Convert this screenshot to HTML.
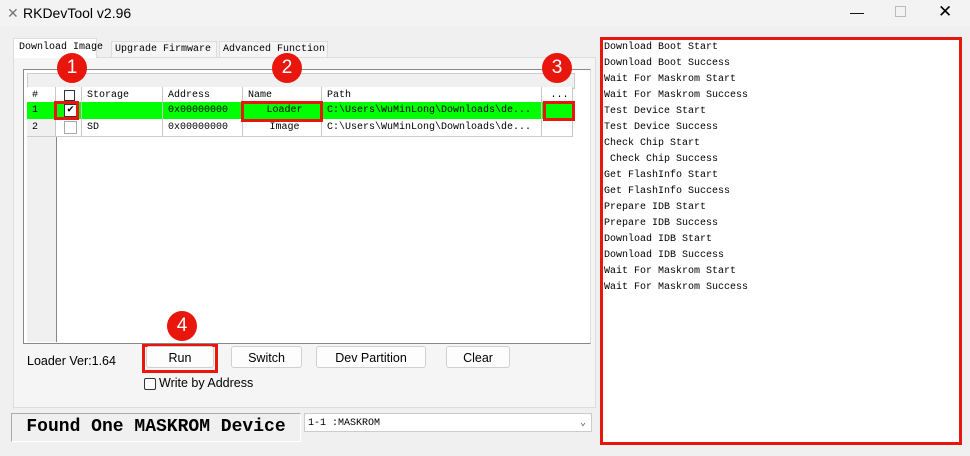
<!DOCTYPE html><html><head><style>
body{margin:0;width:970px;height:456px;background:#f0f0f0;font-family:"Liberation Sans",sans-serif;position:relative;overflow:hidden}
.a{position:absolute}
.mono{font-family:"Liberation Mono",monospace;font-size:10px}
.btn{position:absolute;top:346px;height:22px;background:#fdfdfd;border:1px solid #d0d0d0;border-radius:3px;font-size:12.5px;text-align:center;line-height:22px;box-sizing:border-box}
.c{position:absolute;width:30px;height:30px;border-radius:50%;background:#e8160c;color:#fff;font-size:19px;text-align:center;line-height:30px}
.row{position:absolute;left:27px;width:546px;height:17px;line-height:17px}
.cell{position:absolute;top:0;height:17px;border-right:1px solid #c8c8c8;box-sizing:border-box;padding-left:5px;white-space:nowrap;overflow:hidden}
.log div{height:16px;line-height:16px}
.tab{position:absolute;top:41px;height:16px;line-height:16px;border:1px solid #ddd;border-bottom:none;background:#f5f5f5;padding-left:3px;box-sizing:border-box;white-space:nowrap}
</style></head><body>
<div class="a" style="left:0;top:0;width:970px;height:27px;background:#f3f3f3"></div>
<div class="a" style="left:7px;top:5px;font-size:14px;color:#777">✕</div>
<div class="a" style="left:23px;top:5px;font-size:14px">RKDevTool v2.96</div>
<div class="a" style="left:850px;top:4px;font-size:14px">—</div>
<div class="a" style="left:895px;top:6px;width:9px;height:9px;border:1px solid #bbb"></div>
<div class="a" style="left:938px;top:2px;font-size:17px">✕</div>
<!-- tabs -->
<div class="a" style="left:13px;top:57px;width:581px;height:349px;background:#f5f5f5;border:1px solid #ddd"></div>
<div class="tab mono" style="left:13px;top:38px;width:84px;height:20px;line-height:18px;background:#fff;padding-left:5px">Download Image</div>
<div class="tab mono" style="left:111px;width:106px">Upgrade Firmware</div>
<div class="tab mono" style="left:219px;width:109px">Advanced Function</div>
<!-- list -->
<div class="a" style="left:23px;top:69px;width:566px;height:273px;background:#fff;border:1px solid #888;border-right-color:#ddd"></div>
<div class="a" style="left:27px;top:73px;width:546px;height:14px;border:1px solid #ccc;background:#f0f0f0"></div>
<div class="a" style="left:27px;top:135px;width:29px;height:207px;background:#f0f0f0;border-right:1px solid #888"></div>
<div class="row mono" style="top:87px;background:#fff;border-bottom:1px solid #ccc">
<div class="cell" style="left:0;width:29px">#</div><div class="cell" style="left:29px;width:26px"><span class="a" style="left:8px;top:3px;width:9px;height:9px;border:1px solid #333"></span></div><div class="cell" style="left:55px;width:81px">Storage</div><div class="cell" style="left:136px;width:80px">Address</div><div class="cell" style="left:216px;width:79px">Name</div><div class="cell" style="left:295px;width:220px">Path</div><div class="cell" style="left:515px;width:31px;text-align:center">...</div></div>
<div class="row mono" style="top:102px;background:#00ff00">
<div class="cell" style="left:0;width:29px">1</div><div class="cell" style="left:29px;width:26px"><span class="a" style="left:8px;top:2px;width:11px;height:11px;border:1px solid #333;background:#fff;font-size:11px;line-height:11px;text-align:center">✔</span></div><div class="cell" style="left:55px;width:81px"></div><div class="cell" style="left:136px;width:80px">0x00000000</div><div class="cell" style="left:216px;width:79px;text-align:center">Loader</div><div class="cell" style="left:295px;width:220px">C:\Users\WuMinLong\Downloads\de...</div><div class="cell" style="left:515px;width:31px"></div></div>
<div class="row mono" style="top:119px;background:#fff;border-bottom:1px solid #ccc">
<div class="cell" style="left:0;width:29px;background:#f0f0f0">2</div><div class="cell" style="left:29px;width:26px"><span class="a" style="left:8px;top:2px;width:11px;height:11px;border:1px solid #aaa"></span></div><div class="cell" style="left:55px;width:81px">SD</div><div class="cell" style="left:136px;width:80px">0x00000000</div><div class="cell" style="left:216px;width:79px;text-align:center">Image</div><div class="cell" style="left:295px;width:220px">C:\Users\WuMinLong\Downloads\de...</div><div class="cell" style="left:515px;width:31px"></div></div>
<!-- red boxes -->
<div class="a" style="left:54px;top:101px;width:25px;height:19px;border:3px solid #e8160c;box-sizing:border-box"></div>
<div class="a" style="left:241px;top:101px;width:82px;height:21px;border:3px solid #e8160c;box-sizing:border-box"></div>
<div class="a" style="left:543px;top:101px;width:32px;height:20px;border:3px solid #e8160c;box-sizing:border-box"></div>
<div class="a" style="left:142px;top:344px;width:76px;height:29px;border:3px solid #e8160c;box-sizing:border-box"></div>
<div class="c" style="left:57px;top:53px">1</div><div class="c" style="left:272px;top:53px">2</div><div class="c" style="left:542px;top:53px">3</div><div class="c" style="left:167px;top:311px">4</div><div class="c" style="left:772px;top:212px">5</div>
<!-- buttons -->
<div class="a" style="left:27px;top:354px;font-size:12.5px">Loader Ver:1.64</div>
<div class="btn" style="left:146px;width:68px">Run</div>
<div class="btn" style="left:231px;width:71px">Switch</div>
<div class="btn" style="left:316px;width:110px">Dev Partition</div>
<div class="btn" style="left:446px;width:64px">Clear</div>
<div class="a" style="left:144px;top:378px;width:10px;height:10px;border:1px solid #333;border-radius:2px;background:#fff"></div>
<div class="a" style="left:159px;top:376px;font-size:12.5px">Write by Address</div>
<div class="a" style="left:11px;top:413px;width:288px;height:27px;border:1px solid #aaa;border-right-color:#fff;border-bottom-color:#fff;background:#f0f0f0;font-family:'Liberation Mono',monospace;font-size:18px;font-weight:bold;line-height:27px;text-align:center">Found One MASKROM Device</div>
<div class="a mono" style="left:304px;top:413px;width:288px;height:19px;background:#fff;border:1px solid #ccc;line-height:19px;padding-left:3px;box-sizing:border-box">1-1 :MASKROM<span class="a" style="right:5px;top:0;color:#555">⌄</span></div>
<!-- log -->
<div class="a mono log" style="left:600px;top:37px;width:362px;height:408px;background:#fff;border:3px solid #e8160c;box-sizing:border-box;padding:0 0 0 1px">
<div>Download Boot Start</div><div>Download Boot Success</div><div>Wait For Maskrom Start</div><div>Wait For Maskrom Success</div><div>Test Device Start</div><div>Test Device Success</div><div>Check Chip Start</div><div>&nbsp;Check Chip Success</div><div>Get FlashInfo Start</div><div>Get FlashInfo Success</div><div>Prepare IDB Start</div><div>Prepare IDB Success</div><div>Download IDB Start</div><div>Download IDB Success</div><div>Wait For Maskrom Start</div><div>Wait For Maskrom Success</div></div>
</body></html>
